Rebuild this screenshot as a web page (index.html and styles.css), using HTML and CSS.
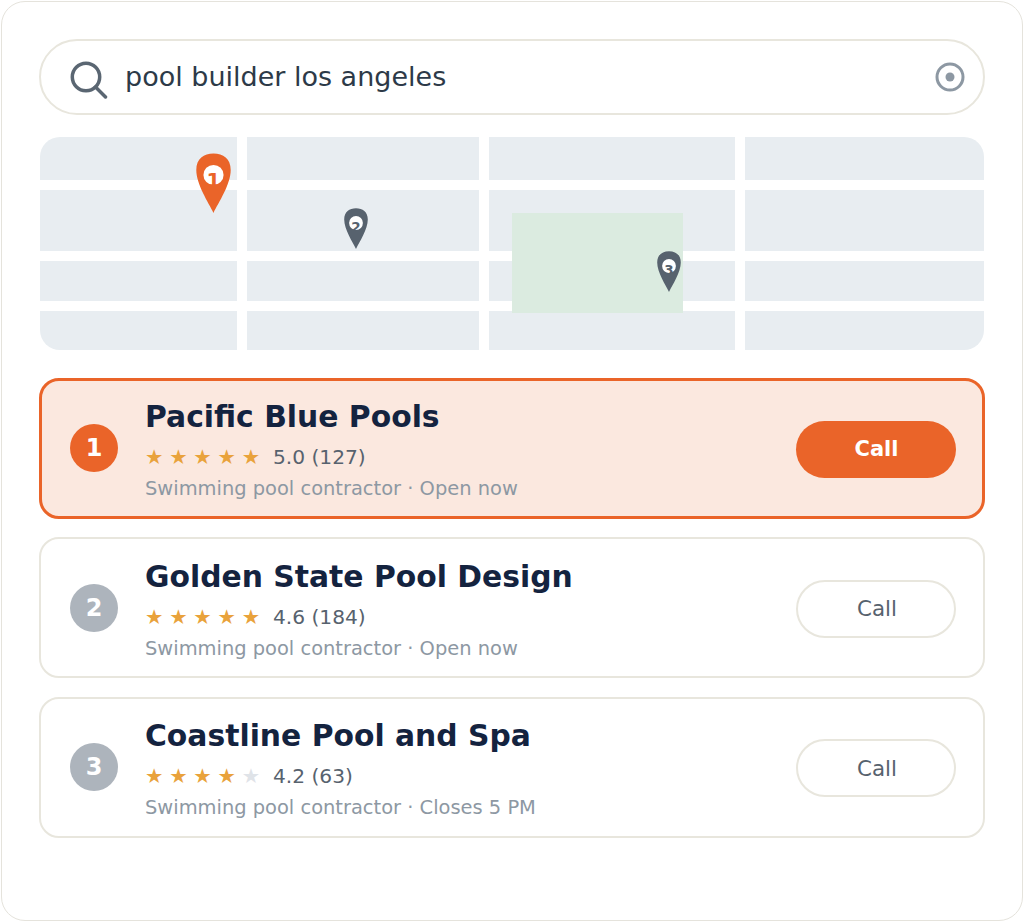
FILE: index.html
```html
<!DOCTYPE html>
<html lang="en">
<head>
  <meta charset="UTF-8" />
  <title>pool builder los angeles</title>
  <link rel="stylesheet" href="styles.css">
</head>
<body>

<div class="frame">

  <div class="search">
    <svg class="search-icon" width="38" height="38" viewBox="0 0 38 38">
      <circle cx="16" cy="16" r="13.7" fill="none" stroke="#5a6672" stroke-width="3.5"/>
      <line x1="25.5" y1="26" x2="35.5" y2="36" stroke="#5a6672" stroke-width="3.5" stroke-linecap="round"/>
    </svg>
    <span class="search-text">pool builder los angeles</span>
    <svg class="locate-icon" width="30" height="30" viewBox="0 0 30 30">
      <circle cx="15" cy="15" r="13" fill="none" stroke="#8d98a3" stroke-width="3"/>
      <circle cx="15" cy="15" r="4.5" fill="#8d98a3"/>
    </svg>
  </div>

  <div class="map">
    <div class="block"></div><div class="block"></div><div class="block"></div><div class="block"></div>
    <div class="block"></div><div class="block"></div><div class="block"></div><div class="block"></div>
    <div class="block"></div><div class="block"></div><div class="block"></div><div class="block"></div>
    <div class="block"></div><div class="block"></div><div class="block"></div><div class="block"></div>
    <div class="park"></div>

    <div class="pin pin-1">
      <svg width="35" height="60" viewBox="0 0 24 41">
        <path d="M12 0.2C5.4 0.2 0.2 3.6 0.2 11.6C0.2 21.5 8.6 34 12 41C15.4 34 23.8 21.5 23.8 11.6C23.8 3.6 18.6 0.2 12 0.2Z" fill="#ea6429"/>
        <circle cx="12" cy="15" r="6.9" fill="#fff"/>
      </svg>
      <span class="pin-num">1</span>
    </div>
    <div class="pin pin-2">
      <svg width="24" height="41" viewBox="0 0 24 41">
        <path d="M12 0.2C5.4 0.2 0.2 3.6 0.2 11.6C0.2 21.5 8.6 34 12 41C15.4 34 23.8 21.5 23.8 11.6C23.8 3.6 18.6 0.2 12 0.2Z" fill="#57626e"/>
        <circle cx="12" cy="15" r="6.9" fill="#fff"/>
      </svg>
      <span class="pin-num">2</span>
    </div>
    <div class="pin pin-3">
      <svg width="24" height="41" viewBox="0 0 24 41">
        <path d="M12 0.2C5.4 0.2 0.2 3.6 0.2 11.6C0.2 21.5 8.6 34 12 41C15.4 34 23.8 21.5 23.8 11.6C23.8 3.6 18.6 0.2 12 0.2Z" fill="#57626e"/>
        <circle cx="12" cy="15" r="6.9" fill="#fff"/>
      </svg>
      <span class="pin-num">3</span>
    </div>
  </div>

  <div class="results">

    <div class="card active">
      <div class="rank">1</div>
      <div class="info">
        <div class="name">Pacific Blue Pools</div>
        <div class="rating">
          <span class="stars">★★★★★</span>
          <span class="score">5.0 (127)</span>
        </div>
        <div class="meta">Swimming pool contractor · Open now</div>
      </div>
      <button class="call" type="button">Call</button>
    </div>

    <div class="card">
      <div class="rank">2</div>
      <div class="info">
        <div class="name">Golden State Pool Design</div>
        <div class="rating">
          <span class="stars">★★★★★</span>
          <span class="score">4.6 (184)</span>
        </div>
        <div class="meta">Swimming pool contractor · Open now</div>
      </div>
      <button class="call" type="button">Call</button>
    </div>

    <div class="card">
      <div class="rank">3</div>
      <div class="info">
        <div class="name">Coastline Pool and Spa</div>
        <div class="rating">
          <span class="stars">★★★★<span class="star-off">★</span></span>
          <span class="score">4.2 (63)</span>
        </div>
        <div class="meta">Swimming pool contractor · Closes 5 PM</div>
      </div>
      <button class="call" type="button">Call</button>
    </div>

  </div>
</div>

</body>
</html>
```

FILE: styles.css
```css
* {
  box-sizing: border-box;
}

body {
  margin: 0;
  height: 922px;
  padding: 1px;
  overflow: hidden;
  background: #fff;
  font-family: "DejaVu Sans", sans-serif;
}

.frame {
  height: 920px;
  padding: 37px 38px 0;
  border: 1px solid #e5e3dc;
  border-radius: 24px;
}

.search {
  display: flex;
  align-items: center;
  height: 76px;
  margin: 0 -1px;
  padding: 0 18px 0 29px;
  border: 2px solid #e8e6dd;
  border-radius: 38px;
}

.search-icon {
  flex: none;
  margin-top: 5px;
}

.search-text {
  flex: 1;
  margin: 0 0 2px 17px;
  font-size: 27px;
  color: #2d3a48;
}

.map {
  position: relative;
  display: grid;
  grid-template-columns: 197px 232px 246px 240px;
  grid-template-rows: 43px 61px 40px 39px;
  gap: 10px;
  height: 213px;
  margin-top: 22px;
  border-radius: 20px;
  overflow: hidden;
}

.block {
  background: #e8edf1;
}

.park {
  position: absolute;
  left: 472px;
  top: 76px;
  width: 171px;
  height: 100px;
  background: #dbebe0;
}

.pin {
  position: absolute;
  line-height: 0;
}

.pin-1 { left: 156px; top: 16px; }
.pin-2 { left: 304px; top: 71px; }
.pin-3 { left: 617px; top: 114px; }

.pin-num {
  position: absolute;
  left: 0;
  right: 0;
  top: 11px;
  font-size: 13.5px;
  font-weight: bold;
  line-height: 16px;
  text-align: center;
  color: #57626e;
}

.pin-1 .pin-num {
  top: 19px;
  font-size: 20px;
  color: #ea6429;
}

.results {
  display: flex;
  flex-direction: column;
  gap: 18.5px;
  margin: 27.5px -1px 0;
}

.card {
  display: flex;
  align-items: center;
  height: 141px;
  padding: 0 27px 0 29px;
  border: 2px solid #e8e6dd;
  border-radius: 20px;
}

.card.active {
  background: #fbe8df;
  border: 3px solid #ea6429;
  padding: 0 26px 0 28px;
}

.rank {
  flex: none;
  width: 48px;
  height: 48px;
  border-radius: 50%;
  background: #adb4bc;
  color: #fff;
  font-size: 24px;
  font-weight: bold;
  line-height: 48px;
  text-align: center;
}

.active .rank {
  background: #ea6429;
}

.info {
  flex: 1;
  margin-left: 27px;
  padding-top: 5px;
}

.name {
  font-size: 29.8px;
  font-weight: bold;
  line-height: 34px;
  color: #14233f;
}

.rating {
  display: flex;
  align-items: center;
  margin-top: 11px;
  height: 24px;
}

.stars {
  font-size: 20.5px;
  letter-spacing: 5.8px;
  color: #e9a23b;
}

.star-off {
  color: #dfe3e8;
}

.score {
  margin-left: 7px;
  font-size: 20.2px;
  color: #57626e;
}

.meta {
  margin-top: 8px;
  font-size: 19.45px;
  line-height: 24px;
  color: #8d98a3;
}

.call {
  flex: none;
  width: 160px;
  height: 58px;
  margin-top: 2px;
  padding: 0 0 0 2px;
  background: #fff;
  border: 2px solid #e8e6dd;
  border-radius: 29px;
  font-family: inherit;
  font-size: 21.4px;
  color: #57626e;
}

.active .call {
  height: 57px;
  padding: 0 0 0 1px;
  background: #ea6429;
  border: none;
  font-size: 21px;
  font-weight: bold;
  color: #fff;
}
```
